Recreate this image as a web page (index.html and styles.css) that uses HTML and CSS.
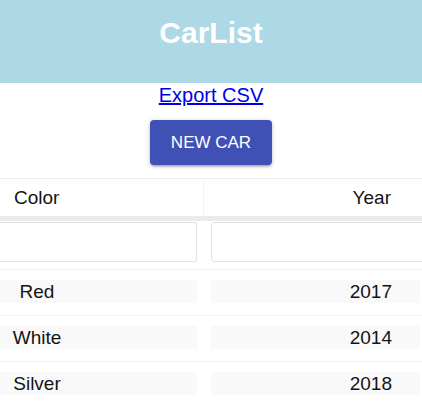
FILE: index.html
```html
<!DOCTYPE html>
<html>
<head>
<meta charset="utf-8">
<link rel="stylesheet" href="styles.css">
</head>
<body>
<div class="app">
  <header class="app-header">
    <h1 class="app-title">CarList</h1>
  </header>
  <div class="toolbar">
    <a class="export-link" href="#">Export CSV</a>
    <button class="btn-new">NEW CAR</button>
  </div>
  <div class="table">
    <div class="thead">
      <div class="th th-color">Color</div>
      <div class="th th-year">Year</div>
    </div>
    <div class="filter-row">
      <div class="fcell fcell-left"><div class="finput"></div></div>
      <div class="fcell fcell-right"><div class="finput"></div></div>
    </div>
    <div class="tr">
      <div class="td td-left"><div class="cell-box"><span class="color-text">Red</span></div></div>
      <div class="td td-right"><div class="cell-box year">2017</div></div>
    </div>
    <div class="tr">
      <div class="td td-left"><div class="cell-box"><span class="color-text">White</span></div></div>
      <div class="td td-right"><div class="cell-box year">2014</div></div>
    </div>
    <div class="tr">
      <div class="td td-left"><div class="cell-box"><span class="color-text">Silver</span></div></div>
      <div class="td td-right"><div class="cell-box year">2018</div></div>
    </div>
  </div>
</div>
</body>
</html>
```

FILE: styles.css
```css
html, body {
  margin: 0;
  padding: 0;
  background: #ffffff;
}
body {
  font-family: "Liberation Sans", Arial, sans-serif;
  width: 422px;
  overflow: hidden;
}
.app {
  display: flex;
  flex-direction: column;
}
.app-header {
  height: 83px;
  background: #add8e6;
  box-sizing: border-box;
  padding-top: 16px;
}
.app-title {
  margin: 0;
  font-size: 30px;
  line-height: 34px;
  font-weight: bold;
  color: #ffffff;
  text-align: center;
}
.toolbar {
  display: flex;
  flex-direction: column;
  align-items: center;
  padding-top: 1px;
}
.export-link {
  font-size: 20px;
  line-height: 23px;
  color: #0000ee;
  text-decoration: underline;
}
.btn-new {
  margin-top: 13px;
  width: 122px;
  height: 45px;
  border: none;
  border-radius: 4px;
  background: #3f51b5;
  color: #ffffff;
  font-family: "Liberation Sans", Arial, sans-serif;
  font-size: 17px;
  padding: 0;
  box-shadow: 0 1px 5px rgba(0,0,0,0.2), 0 2px 2px rgba(0,0,0,0.14), 0 3px 1px -2px rgba(0,0,0,0.12);
}
.table {
  margin-top: 13px;
  width: 427px;
  border-top: 1px solid #ececec;
  color: #141414;
  font-size: 19px;
}
.thead {
  display: grid;
  grid-template-columns: 204px 223px;
  height: 37px;
  border-bottom: 5px solid #ebebeb;
}
.th {
  display: flex;
  align-items: center;
  line-height: 22px;
}
.th-color {
  padding-left: 14px;
  border-right: 1px solid #f2f2f2;
}
.th-year {
  justify-content: flex-end;
  padding-right: 36px;
}
.filter-row {
  display: grid;
  grid-template-columns: 204px 223px;
  height: 48px;
  border-bottom: 1px solid #f2f2f2;
}
.fcell {
  padding-top: 1px;
}
.fcell-left {
  padding-right: 7px;
}
.fcell-right {
  padding-left: 7px;
}
.finput {
  height: 40px;
  box-sizing: border-box;
  border: 1px solid #e2e2e2;
  border-radius: 3px;
  background: #ffffff;
}
.fcell-left .finput {
  border-left: none;
  border-top-left-radius: 0;
  border-bottom-left-radius: 0;
}
.tr {
  display: grid;
  grid-template-columns: 204px 223px;
  height: 45px;
  border-bottom: 1px solid #f2f2f2;
}
.td {
  padding-top: 10px;
}
.td-left {
  padding-right: 7px;
}
.td-right {
  padding-left: 7px;
  padding-right: 7px;
}
.cell-box {
  height: 23px;
  line-height: 23px;
  background: #f9f9f9;
}
.color-text {
  display: inline-block;
  width: 74px;
  text-align: center;
}
.year {
  text-align: right;
  padding-right: 28px;
}
```
